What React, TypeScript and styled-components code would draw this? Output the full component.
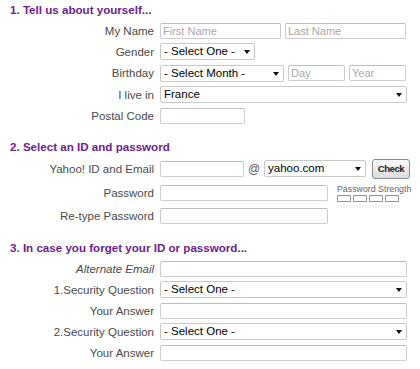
import styled, { createGlobalStyle } from "styled-components";

const GlobalStyle = createGlobalStyle`
  html, body {
    margin: 0;
    padding: 0;
    background: #fff;
  }
  body {
    font-family: "Liberation Sans", Arial, sans-serif;
  }
`;

const Form = styled.form`
  width: 420px;
  padding-top: 3px;
`;

const Section = styled.section`
  & + & {
    margin-top: 14px;
  }
`;

const Heading = styled.h3`
  margin: 0 0 3px 10px;
  font-size: 11.6px;
  line-height: 14px;
  font-weight: bold;
  color: #6c1d8e;
`;

const Row = styled.div<{ $h?: number }>`
  display: flex;
  align-items: center;
  gap: 4px;
  height: ${(p) => p.$h ?? 21}px;
`;

const Label = styled.label<{ $italic?: boolean }>`
  flex: none;
  width: 154px;
  margin-right: 2px;
  text-align: right;
  font-size: 11.5px;
  color: #4a4a4a;
  font-style: ${(p) => (p.$italic ? "italic" : "normal")};
  white-space: nowrap;
`;

const Input = styled.input<{ $w: number }>`
  box-sizing: border-box;
  width: ${(p) => p.$w}px;
  height: 16px;
  margin: 0;
  padding: 0 2px;
  border: 1px solid #cdcdcd;
  border-top-color: #bdbdbd;
  border-radius: 2px;
  background: #fff;
  font-family: "Liberation Sans", Arial, sans-serif;
  font-size: 11px;
  color: #222;
  outline: none;

  &::placeholder {
    color: #a8a8a8;
  }
`;

const SelectWrap = styled.span<{ $w: number }>`
  position: relative;
  display: inline-flex;
  width: ${(p) => p.$w}px;

  &::after {
    content: "";
    position: absolute;
    right: 5px;
    top: 7px;
    border-left: 3px solid transparent;
    border-right: 3px solid transparent;
    border-top: 4px solid #111;
    pointer-events: none;
  }
`;

const Select = styled.select`
  appearance: none;
  -webkit-appearance: none;
  box-sizing: border-box;
  width: 100%;
  height: 17px;
  margin: 0;
  padding: 0 14px 0 3px;
  border: 1px solid #c8c8c8;
  border-radius: 2px;
  background: #fff;
  font-family: "Liberation Sans", Arial, sans-serif;
  font-size: 11.5px;
  line-height: 15px;
  color: #000;
  outline: none;
`;

const At = styled.span`
  width: 12px;
  font-size: 12px;
  color: #555;
  text-align: center;
`;

const CheckButton = styled.button`
  box-sizing: border-box;
  width: 38px;
  height: 20px;
  margin-left: 2px;
  padding: 0 2px;
  border: 1px solid #8c8c8c;
  border-radius: 3px;
  background: linear-gradient(#fafafa, #dcdcdc);
  font-family: "Liberation Sans", Arial, sans-serif;
  font-size: 9.5px;
  font-weight: bold;
  letter-spacing: -0.4px;
  color: #222;
  overflow: hidden;
  white-space: nowrap;
`;

const Strength = styled.div`
  display: flex;
  flex-direction: column;
  gap: 2px;
  margin-left: 5px;
  margin-top: 2px;
`;

const StrengthText = styled.span`
  font-size: 8.8px;
  line-height: 8px;
  color: #666;
  white-space: nowrap;
`;

const Meter = styled.div`
  display: flex;
  gap: 2px;
`;

const MeterBox = styled.span`
  box-sizing: border-box;
  width: 14px;
  height: 7px;
  border: 1px solid #9a9a9a;
  background: #fff;
`;

const Dropdown = ({ w, value }: { w: number; value: string }) => (
  <SelectWrap $w={w}>
    <Select defaultValue={value}>
      <option>{value}</option>
    </Select>
  </SelectWrap>
);

const App = () => (
  <>
    <GlobalStyle />
    <Form>
      <Section>
        <Heading>1. Tell us about yourself...</Heading>
        <Row $h={21.3}>
          <Label>My Name</Label>
          <Input $w={121} placeholder="First Name" />
          <Input $w={121} placeholder="Last Name" />
        </Row>
        <Row $h={21.3}>
          <Label>Gender</Label>
          <Dropdown w={95} value="- Select One -" />
        </Row>
        <Row $h={21.3}>
          <Label>Birthday</Label>
          <Dropdown w={124} value="- Select Month -" />
          <Input $w={57} placeholder="Day" />
          <Input $w={57} placeholder="Year" />
        </Row>
        <Row $h={21.3}>
          <Label>I live in</Label>
          <Dropdown w={247} value="France" />
        </Row>
        <Row $h={21.3}>
          <Label>Postal Code</Label>
          <Input $w={85} />
        </Row>
      </Section>

      <Section>
        <Heading>2. Select an ID and password</Heading>
        <Row $h={23}>
          <Label>Yahoo! ID and Email</Label>
          <Input $w={84} />
          <At>@</At>
          <Dropdown w={102} value="yahoo.com" />
          <CheckButton type="button">Check</CheckButton>
        </Row>
        <Row $h={25}>
          <Label>Password</Label>
          <Input $w={168} type="password" />
          <Strength>
            <StrengthText>Password Strength</StrengthText>
            <Meter>
              <MeterBox />
              <MeterBox />
              <MeterBox />
              <MeterBox />
            </Meter>
          </Strength>
        </Row>
        <Row $h={22}>
          <Label>Re-type Password</Label>
          <Input $w={168} type="password" />
        </Row>
      </Section>

      <Section>
        <Heading>3. In case you forget your ID or password...</Heading>
        <Row>
          <Label $italic>Alternate Email</Label>
          <Input $w={247} />
        </Row>
        <Row>
          <Label>1.Security Question</Label>
          <Dropdown w={247} value="- Select One -" />
        </Row>
        <Row>
          <Label>Your Answer</Label>
          <Input $w={247} />
        </Row>
        <Row>
          <Label>2.Security Question</Label>
          <Dropdown w={247} value="- Select One -" />
        </Row>
        <Row>
          <Label>Your Answer</Label>
          <Input $w={247} />
        </Row>
      </Section>
    </Form>
  </>
);

export default App;
